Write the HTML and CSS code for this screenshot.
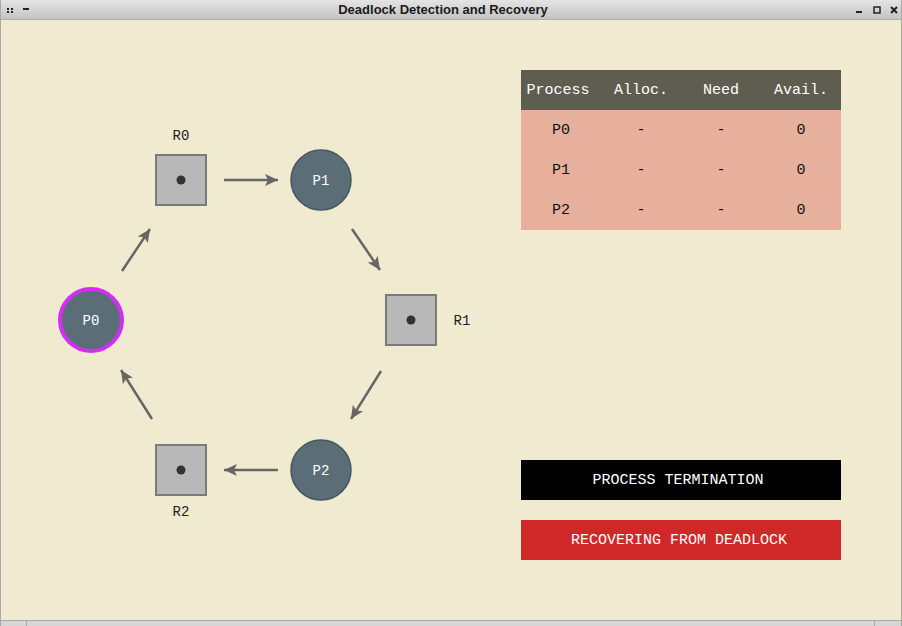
FILE: index.html
```html
<!DOCTYPE html>
<html>
<head>
<meta charset="utf-8">
<link rel="stylesheet" href="styles.css">
</head>
<body>
<div class="window">
  <div class="titlebar">
    <div class="tb-left">
      <svg width="34" height="10" viewBox="0 0 34 10"><rect x="6" y="3" width="2" height="2" fill="#222"/><rect x="10" y="3" width="2" height="2" fill="#222"/><rect x="6" y="6" width="2" height="2" fill="#222"/><rect x="10" y="6" width="2" height="2" fill="#222"/><rect x="22" y="3" width="6" height="2" fill="#222"/></svg>
    </div>
    <div class="title">Deadlock Detection and Recovery</div>
    <div class="tb-right">
      <svg width="48" height="10" viewBox="0 0 48 10"><rect x="3" y="6" width="6" height="2" fill="#222"/><rect x="21" y="2" width="6" height="6" fill="none" stroke="#222" stroke-width="1.5"/><path d="M38 2 L44 8 M44 2 L38 8" stroke="#222" stroke-width="2"/></svg>
    </div>
  </div>
  <div class="client">
    <svg class="diagram" width="521" height="600" viewBox="0 20 521 600">
      <defs>
        <marker id="ah" markerUnits="userSpaceOnUse" markerWidth="14" markerHeight="12" refX="13" refY="6" orient="auto">
          <path d="M0 0 L13 6 L0 12 L3 6 Z" fill="#666"/>
        </marker>
      </defs>
      <g class="edges">
        <line x1="224" y1="180" x2="278" y2="180"/>
        <line x1="352" y1="229" x2="380" y2="270"/>
        <line x1="381" y1="371" x2="351" y2="419"/>
        <line x1="278" y1="470" x2="224" y2="470"/>
        <line x1="152" y1="419" x2="121" y2="370"/>
        <line x1="122" y1="271" x2="150" y2="229"/>
      </g>
      <g class="res">
        <rect x="156" y="155" width="50" height="50"/>
        <rect x="386" y="295" width="50" height="50"/>
        <rect x="156" y="445" width="50" height="50"/>
      </g>
      <g class="dots">
        <circle cx="181" cy="180" r="4.5"/>
        <circle cx="411" cy="320" r="4.5"/>
        <circle cx="181" cy="470" r="4.5"/>
      </g>
      <g class="rlabel">
        <text x="181" y="140">R0</text>
        <text x="462" y="325">R1</text>
        <text x="181" y="516">R2</text>
      </g>
      <g class="proc">
        <circle cx="321" cy="180" r="30"/>
        <circle cx="321" cy="470" r="30"/>
        <circle class="sel" cx="91" cy="320" r="31"/>
      </g>
      <g class="plabel">
        <text x="321" y="185">P1</text>
        <text x="321" y="475">P2</text>
        <text x="91" y="325">P0</text>
      </g>
    </svg>
    <div class="panel">
      <table class="matrix">
        <thead>
          <tr><th>Process</th><th>Alloc.</th><th>Need</th><th>Avail.</th></tr>
        </thead>
        <tbody>
          <tr><td>P0</td><td>-</td><td>-</td><td>0</td></tr>
          <tr><td>P1</td><td>-</td><td>-</td><td>0</td></tr>
          <tr><td>P2</td><td>-</td><td>-</td><td>0</td></tr>
        </tbody>
      </table>
      <div class="btn btn-dark">PROCESS TERMINATION</div>
      <div class="btn btn-red">RECOVERING FROM DEADLOCK</div>
    </div>
  </div>
  <div class="statusbar">
    <div class="sb-cell sb-a"></div>
    <div class="sb-cell sb-b"></div>
    <div class="sb-cell sb-c"></div>
  </div>
</div>
</body>
</html>
```
FILE: styles.css
```css
html, body {
  margin: 0;
  padding: 0;
  width: 902px;
  height: 626px;
  overflow: hidden;
}
.window {
  width: 902px;
  height: 626px;
  display: flex;
  flex-direction: column;
  box-sizing: border-box;
  border-left: 1px solid #a9a9a9;
  border-right: 1px solid #a9a9a9;
  background: #f0ead0;
}
.titlebar {
  height: 20px;
  flex: none;
  display: flex;
  align-items: center;
  background: linear-gradient(#e4e4e4, #c4c4c4);
  border-bottom: 1px solid #b0b0b0;
  box-sizing: border-box;
}
.tb-left, .tb-right {
  width: 60px;
  display: flex;
}
.tb-right { justify-content: flex-end; }
.title {
  flex: 1;
  text-align: center;
  font-family: "Liberation Sans", Arial, sans-serif;
  font-weight: bold;
  font-size: 13px;
  color: #1a1a1a;
  padding-right: 16px;
}
.client {
  flex: 1;
  display: flex;
  background: #f0ead0;
}
.diagram {
  display: block;
  flex: none;
  margin-left: -1px;
}
.edges line {
  stroke: #666;
  stroke-width: 2.5;
  marker-end: url(#ah);
}
.res rect {
  fill: #b8b8b8;
  stroke: #7b7b7b;
  stroke-width: 2;
}
.dots circle { fill: #333; }
.rlabel text, .plabel text {
  font-family: "Liberation Mono", "DejaVu Sans Mono", monospace;
  font-size: 14px;
  text-anchor: middle;
}
.rlabel text { fill: #222; }
.plabel text { fill: #fff; }
.proc circle {
  fill: #5b6e78;
  stroke: #455860;
  stroke-width: 1.5;
}
.proc circle.sel {
  stroke: #d22ff2;
  stroke-width: 4;
}
.panel {
  width: 320px;
  padding-top: 50px;
  display: flex;
  flex-direction: column;
}
.matrix {
  width: 320px;
  border-collapse: collapse;
  table-layout: fixed;
  font-family: "Liberation Mono", "DejaVu Sans Mono", monospace;
  font-size: 15px;
}
.matrix th, .matrix td {
  height: 40px;
  padding: 0;
  text-align: center;
  font-weight: normal;
}
.matrix th {
  background: #5f5d50;
  color: #fff;
}
.matrix th:first-child { padding-right: 6px; }
.matrix td {
  background: #e6b09c;
  color: #111;
  padding-top: 1px;
  box-sizing: border-box;
}
.btn {
  height: 40px;
  display: flex;
  align-items: center;
  justify-content: center;
  font-family: "Liberation Mono", "DejaVu Sans Mono", monospace;
  font-size: 15px;
  color: #fff;
  padding-right: 6px;
}
.btn-dark {
  background: #000;
  margin-top: 230px;
}
.btn-red {
  background: #d02828;
  margin-top: 20px;
  padding-right: 4px;
}
.statusbar {
  height: 6px;
  flex: none;
  display: flex;
  border-top: 1px solid #a9a9a9;
  background: #d6d6d6;
}
.sb-cell { height: 100%; box-sizing: border-box; }
.sb-a { width: 26px; border-right: 1px solid #a9a9a9; }
.sb-b { flex: 1; border-right: 1px solid #a9a9a9; }
.sb-c { width: 26px; }
```
